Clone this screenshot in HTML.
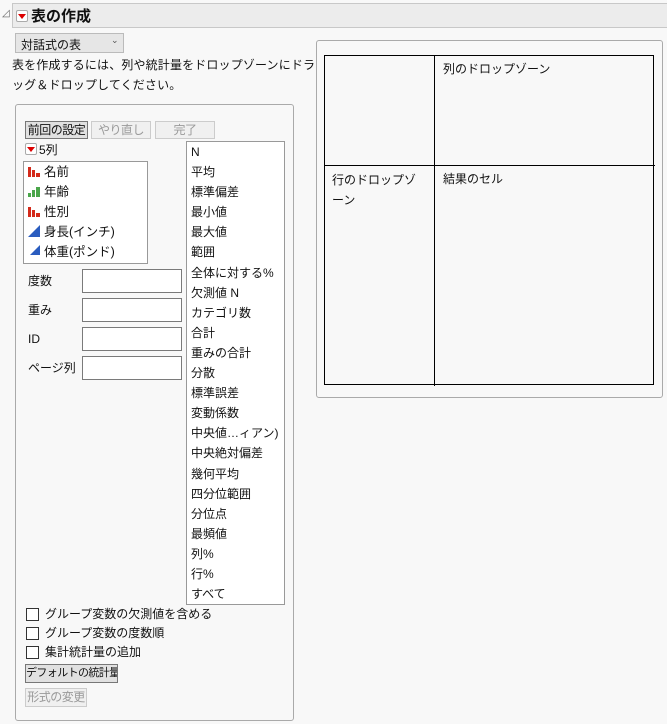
<!DOCTYPE html>
<html><head><meta charset="utf-8"><style>
body{margin:0;width:667px;height:724px;background:#f8f8f8;font-family:"Liberation Sans","Noto Sans CJK JP",sans-serif;font-size:12px;color:#111;position:relative;overflow:hidden}
.a{position:absolute;white-space:nowrap}
.box{position:absolute;box-sizing:border-box}
.btn{position:absolute;box-sizing:border-box;border:1px solid #adadad;background:#e1e1e1;text-align:center;line-height:16px;font-size:12px;white-space:nowrap;overflow:hidden;letter-spacing:-0.5px}
.dis{color:#9a9a9a;background:#f0f0f0;border-color:#ccc}
.inp{position:absolute;left:82px;width:100px;height:24px;box-sizing:border-box;border:1px solid #7a7a7a;background:#fff}
.cb{position:absolute;left:26px;width:13px;height:13px;box-sizing:border-box;border:1px solid #333;background:#fff}
.tri{position:absolute;width:0;height:0;border-left:4px solid transparent;border-right:4px solid transparent;border-top:5px solid #d00}
.rb{position:absolute;width:12px;height:12px;box-sizing:border-box;border:1px solid #aaa;background:#fff;border-radius:2px}
</style></head><body>
<div class="a" style="left:2px;top:8px;font-size:10px;color:#666">◿</div>
<div class="box" style="left:12px;top:3px;width:655px;height:25px;background:#ececec;border:1px solid #c8c8c8;border-right:none"></div>
<div class="rb" style="left:16px;top:10px"></div><div class="tri" style="left:18px;top:14px"></div>
<div class="a" style="left:31px;top:5px;font-size:15px;font-weight:bold">表の作成</div>
<div class="box" style="left:15px;top:33px;width:109px;height:20px;border:1px solid #bbb;background:#e6e6e6"></div>
<div class="a" style="left:21px;top:36px">対話式の表</div>
<div class="a" style="left:111px;top:35px;font-size:9px;color:#555">⌄</div>
<div class="a" style="left:12px;top:55px;font-size:12px;line-height:20px;letter-spacing:0.15px">表を作成するには、列や統計量をドロップゾーンにドラ<br>ッグ＆ドロップしてください。</div>
<div class="box" style="left:15px;top:104px;width:279px;height:617px;border:1px solid #aaa;border-radius:3px"></div>
<div class="btn" style="left:25px;top:121px;width:63px;height:18px;border-color:#777">前回の設定</div>
<div class="btn dis" style="left:91px;top:121px;width:60px;height:18px">やり直し</div>
<div class="btn dis" style="left:155px;top:121px;width:60px;height:18px">完了</div>
<div class="rb" style="left:25px;top:143px"></div><div class="tri" style="left:27px;top:147px"></div>
<div class="a" style="left:39px;top:141px">5列</div>
<div class="box" style="left:23px;top:161px;width:125px;height:103px;border:1px solid #999;background:#fff"></div>
<svg class="a" style="left:28px;top:165px" width="14" height="90">
<g fill="#d42a1a"><rect x="0" y="2" width="3" height="10"/><rect x="4" y="5" width="3" height="7"/><rect x="8" y="8" width="4" height="4"/></g>
<g fill="#4aa64a" transform="translate(0,20)"><rect x="0" y="8" width="3" height="4"/><rect x="4" y="5" width="3" height="7"/><rect x="8" y="2" width="4" height="10"/></g>
<g fill="#d42a1a" transform="translate(0,40)"><rect x="0" y="2" width="3" height="10"/><rect x="4" y="5" width="3" height="7"/><rect x="8" y="8" width="4" height="4"/></g>
<polygon points="0,72 12,60 12,72" fill="#2a5cbf"/><polygon points="0,92 12,80 12,92" fill="#2a5cbf"/>
</svg>
<div class="a" style="left:44px;top:162px;line-height:20px;font-size:12.5px">名前<br>年齢<br>性別<br>身長(インチ)<br>体重(ポンド)</div>
<div class="a" style="left:28px;top:267px;line-height:29px">度数<br>重み<br>ID<br>ページ列</div>
<div class="inp" style="top:269px"></div><div class="inp" style="top:298px"></div><div class="inp" style="top:327px"></div><div class="inp" style="top:356px"></div>
<div class="box" style="left:186px;top:141px;width:99px;height:464px;border:1px solid #999;background:#fff"></div>
<div class="a" style="left:191px;top:142px;line-height:20.1px;font-size:12px">N<br>平均<br>標準偏差<br>最小値<br>最大値<br>範囲<br>全体に対する%<br>欠測値 N<br>カテゴリ数<br>合計<br>重みの合計<br>分散<br>標準誤差<br>変動係数<br>中央値…ィアン)<br>中央絶対偏差<br>幾何平均<br>四分位範囲<br>分位点<br>最頻値<br>列%<br>行%<br>すべて</div>
<div class="cb" style="top:608px"></div><div class="cb" style="top:627px"></div><div class="cb" style="top:646px"></div>
<div class="a" style="left:45px;top:605px;line-height:19px">グループ変数の欠測値を含める<br>グループ変数の度数順<br>集計統計量の追加</div>
<div class="btn" style="left:25px;top:664px;width:93px;height:19px;border-color:#777;font-size:11px;letter-spacing:-0.6px;line-height:17px">デフォルトの統計量</div>
<div class="btn dis" style="left:25px;top:688px;width:62px;height:19px">形式の変更</div>
<div class="box" style="left:316px;top:40px;width:347px;height:358px;border:1px solid #aaa;border-radius:3px"></div>
<div class="box" style="left:324px;top:55px;width:330px;height:330px;border:1px solid #000"></div>
<div class="box" style="left:434px;top:55px;width:1px;height:331px;background:#000"></div>
<div class="box" style="left:324px;top:165px;width:331px;height:1px;background:#000"></div>
<div class="a" style="left:443px;top:60px">列のドロップゾーン</div>
<div class="a" style="left:332px;top:170px;line-height:20px">行のドロップゾ<br>ーン</div>
<div class="a" style="left:443px;top:170px">結果のセル</div>
</body></html>
